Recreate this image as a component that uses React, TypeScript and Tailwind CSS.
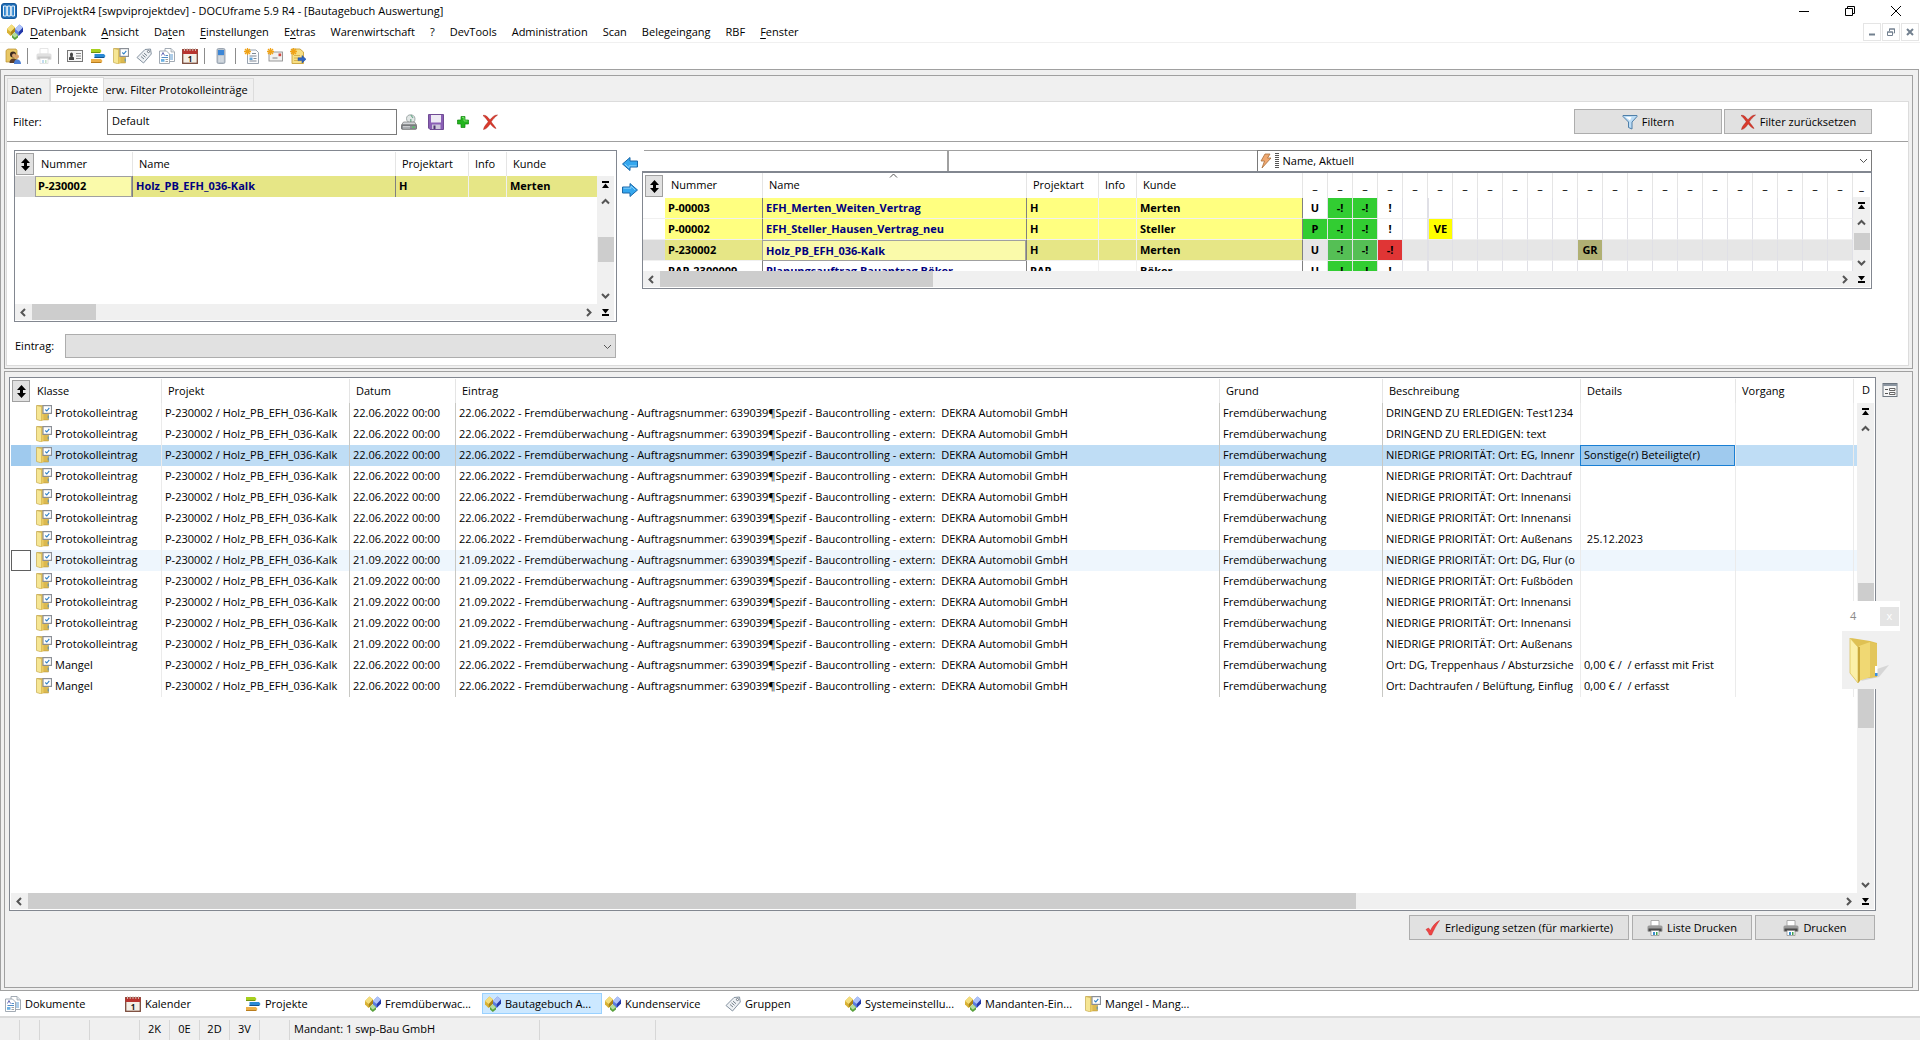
import type { ReactNode } from "react";
import clsx from "clsx";

/* ---------- icons ---------- */

function Icon({ size = 16, className, children }: { size?: number; className?: string; children: ReactNode }) {
  return (
    <svg width={size} height={size} viewBox="0 0 16 16" className={clsx("shrink-0", className)} aria-hidden="true">
      {children}
    </svg>
  );
}

const AppIcon = () => (
  <Icon>
    <rect x="0.5" y="0.5" width="15" height="15" rx="2.5" fill="#1d6cb5" stroke="#15589b" />
    <path d="M2.500 3h2.800v10H2.500zM6.600 3h2.800v10H6.600zM10.700 3h2.800v10h-2.800z" fill="#2f86d0" stroke="#fff" strokeWidth="0.9" />
  </Icon>
);

const CubesIcon = () => (
  <Icon>
    <path d="M4.500.5 8 3.500v4L3.500 12 0 8.500V5z" fill="#d9b235" />
    <path d="M4.500.5 8 3.500 3.800 8 0 5z" fill="#f4de7c" />
    <path d="M3.800 8v3.700L8 7.500v-4z" fill="#a98418" />
    <path d="M12.500.5 16 3.500v4L11.500 12 8 8.500V5z" fill="#5a7be0" />
    <path d="M12.500.5 16 3.500 11.800 8 8 5z" fill="#aec3f8" />
    <path d="M11.800 8v3.700L16 7.500v-4z" fill="#2338a8" />
    <path d="M8 8.500 11 11.300v2.200L7.800 16 5 13.500V11z" fill="#59a13c" />
    <path d="M8 8.500 11 11.300 7.800 13.800 5 11z" fill="#b5dd9d" />
  </Icon>
);

const UserFolderIcon = () => (
  <Icon>
    <path d="M1 2.500 3 1h8l1 1.500V14H1z" fill="#e8c765" stroke="#b98f2e" strokeWidth="0.700" />
    <circle cx="8" cy="6.500" r="3" fill="#3b2a20" />
    <circle cx="9" cy="7.500" r="2" fill="#dca66e" />
    <path d="M4.500 15c0-3 1.500-4.500 4-4.500S12.500 12 13 15z" fill="#5b3d2b" />
    <circle cx="12" cy="8.500" r="2" fill="#d9a06c" />
    <path d="M9 16c0-3 1-4.500 3.200-4.500S16 13 16 16z" fill="#4d7fd4" />
  </Icon>
);

const PrinterIcon = ({ faded = false }: { faded?: boolean }) => (
  <Icon className={faded ? "opacity-30" : ""}>
    <path d="M4 .5h8V6H4z" fill="#fff" stroke="#9a9a9a" strokeWidth="0.800" />
    <rect x="0.500" y="5.500" width="15" height="6.500" rx="1.500" fill="#9a9a9a" />
    <path d="M1.500 8.500h13v2.500h-13z" fill="#4a4a4a" />
    <path d="M4 10.500h8v5H4z" fill="#fff" stroke="#888" strokeWidth="0.700" />
    <path d="M6 12h2v3H6z" fill="#3b8fd0" />
    <path d="M9 12h1.500v3H9z" fill="#3ea04f" />
  </Icon>
);

const CardIcon = () => (
  <Icon>
    <rect x="0.500" y="2.500" width="15" height="11" fill="#f6f6f6" stroke="#777" />
    <path d="M2 12V9.500l1.500-1C2.500 7 2.800 4.500 4.500 4.500S6.500 7 5.500 8.500l1.500 1V12z" fill="#444" />
    <path d="M9 5.500h5M9 8h5M9 10.500h5" stroke="#888" />
  </Icon>
);

const GanttIcon = () => (
  <Icon>
    <path d="M1 1h9l1.500 2L10 5H1z" fill="#a7cf1e" />
    <path d="M1 4h9.500L10 5H1z" fill="#6f9310" />
    <path d="M4.500 6H14l1.500 2L14 10H4.500z" fill="#2a8ad6" />
    <path d="M4.500 9h10L14 10H4.500z" fill="#12528f" />
    <path d="M1 11h10l1.500 2-1.500 2H1z" fill="#ecb04a" />
    <path d="M1 14h10.700L11 15H1z" fill="#b97d1d" />
  </Icon>
);

const FolderCheckIcon = () => (
  <Icon>
    <path d="M1 .5h11.500v14.500H5L1 14z" fill="#dcb94f" stroke="#b3923a" strokeWidth="0.500" />
    <path d="M.5.5 5.500 1.500V16l-5-1.500z" fill="#f6e694" stroke="#c2a548" strokeWidth="0.600" />
    <path d="M5.500 1.500h2V15l-2 1z" fill="#eacb62" />
    <rect x="7" y="0.600" width="8.500" height="7.800" fill="#fff" stroke="#8b8f96" strokeWidth="1.200" />
    <path d="M9.300 4.500 10.800 6 13.300 2.800" fill="none" stroke="#2d7fc4" strokeWidth="1.100" />
    <path d="M12.200 10.500v3" stroke="#3f88c8" strokeWidth="0.900" />
  </Icon>
);

const TagIcon = () => (
  <Icon>
    <path d="M9 1.500 14.500 1l.8 5L7.500 15 1 9.500z" fill="#eef1f4" stroke="#8592a0" strokeLinejoin="round" />
    <circle cx="12.500" cy="3.500" r="1.100" fill="#fff" stroke="#55606c" strokeWidth="0.800" />
    <path d="M5 8.500 8 11M6.500 6.800 9.500 9.300M8 5.200 11 7.700" stroke="#6b7682" strokeWidth="0.900" />
  </Icon>
);

const DocsIcon = () => (
  <Icon>
    <path d="M6 .5h6L15.500 4v9.500H6z" fill="#fff" stroke="#98a1ab" strokeWidth="0.900" />
    <path d="M12 .5V4h3.500" fill="#dfe5ea" stroke="#98a1ab" strokeWidth="0.700" />
    <path d="M11 7h3M11 9h3M11 11h3" stroke="#5c9ad0" />
    <path d="M.5 3h7L10.500 6v9.500H.5z" fill="#fff" stroke="#98a1ab" strokeWidth="0.900" />
    <path d="M2.500 7.500 4 4.500l1.500 3" fill="none" stroke="#5a5fb0" strokeWidth="0.900" />
    <path d="M6.500 7.500H9M2.500 9.500H9" stroke="#3f7fc0" strokeWidth="0.900" />
    <path d="M2 11h3.500v2.800H2z" fill="#6cb1e2" />
    <path d="M6.500 11.500H9M6.500 13.500H9" stroke="#888" strokeWidth="0.800" />
  </Icon>
);

const CalendarIcon = () => (
  <Icon>
    <rect x="0.700" y="1.700" width="14.600" height="13.600" fill="#f4efe6" stroke="#7a4a3a" strokeWidth="1.300" />
    <path d="M.5 1.500h15V6H.5z" fill="#b8342f" />
    <path d="M2.500 0v3M5.200 0v3M8 0v3M10.800 0v3M13.500 0v3" stroke="#d8c8c0" strokeWidth="0.900" />
    <text x="8" y="13.500" textAnchor="middle" fontSize="8" fontWeight="700" fill="#1a1a1a">
      1
    </text>
  </Icon>
);

const PhoneIcon = () => (
  <Icon>
    <rect x="4" y="0.500" width="8" height="15" rx="1.500" fill="#b9c3cd" stroke="#8a96a3" strokeWidth="0.800" />
    <rect x="5" y="2" width="6" height="5" fill="#3c86d6" />
    <path d="M5.500 9h5M5.500 11h5M5.500 13h5" stroke="#fff" strokeDasharray="1.300 0.600" />
  </Icon>
);

const Star = () => <path d="M3.500 0v7M0 3.500h7M1 1l5 5M6 1 1 6" stroke="#f0a318" strokeWidth="1.300" />;

const DocStarIcon = () => (
  <Icon>
    <path d="M3.500 2h8.500l2.500 2.500v11h-11z" fill="#fbfcfd" stroke="#8d99a6" strokeWidth="0.900" />
    <path d="M8 5.500h4M5.500 8h7M5.500 13h7" stroke="#6f7c89" strokeWidth="0.900" />
    <path d="M5.500 9.500h3v2.500h-3z" fill="#5fa5dc" />
    <path d="M9.500 10.500h3" stroke="#6f7c89" strokeWidth="0.900" />
    <Star />
  </Icon>
);

const MailStarIcon = () => (
  <Icon>
    <rect x="2" y="4" width="13.500" height="9" fill="#f1f1f1" stroke="#8f8f8f" strokeWidth="0.900" />
    <path d="M11.500 5.500h2.700v2.700h-2.700z" fill="#d3473d" />
    <path d="M5.500 10h5" stroke="#777" strokeWidth="0.900" />
    <Star />
  </Icon>
);

const FolderStarIcon = () => (
  <Icon>
    <path d="M2 1h8l3.500 3v11.500H2z" fill="#f7df85" stroke="#c9a23a" strokeWidth="0.900" />
    <path d="M4 7.500h6M4 10h4M4 12.500h4" stroke="#d0a83f" strokeWidth="0.800" />
    <path d="M8 9.800h4V7.500l4 3.700-4 3.800v-2.400H8z" fill="#2f66c4" stroke="#1c4490" strokeWidth="0.500" />
    <Star />
  </Icon>
);

const DriveIcon = () => (
  <Icon>
    <path d="M5.500 4.500C5.500 2 7.500.8 9.500.8s4.500 1 4.500 4-1.500 4-4 4-4.500-1.500-4.500-4.300z" fill="#e2e7e6" stroke="#8d9897" strokeWidth="0.800" />
    <path d="M9.800 1 12 4M9.800 8.500V5" stroke="#6aa98b" strokeWidth="1.200" />
    <path d="M2.500 8h11l2 3H.5z" fill="#d3d6d9" stroke="#777" strokeWidth="0.700" />
    <rect x="0.500" y="11" width="15" height="4.300" rx="0.800" fill="#8b9095" stroke="#555" strokeWidth="0.700" />
    <path d="M2 12.500h7M2 14h7" stroke="#e5e5e5" strokeWidth="0.700" />
    <path d="M11.500 12.500h2v1.500h-2z" fill="#49d05a" />
  </Icon>
);

const FloppyIcon = () => (
  <Icon>
    <path d="M.5.5h15v15H2L.5 14z" fill="#8a5fb5" stroke="#66418c" strokeWidth="0.900" />
    <path d="M3 1h10v7.500H3z" fill="#eeeaf4" />
    <path d="M4 10.500h8.500V15H4z" fill="#cdc6da" />
    <path d="M5.500 11.500h2V15h-2z" fill="#4c3470" />
  </Icon>
);

const PlusIcon = () => (
  <Icon>
    <path d="M6 2.500h4V6h3.500v4H10v3.500H6V10H2.500V6H6z" fill="#23b51e" stroke="#12860f" strokeWidth="0.700" />
    <path d="M7 3.500h2v3.500h3.500" fill="none" stroke="#7fe06f" strokeWidth="0.900" />
  </Icon>
);

const CrossIcon = () => (
  <Icon>
    <path d="M1 1.500C3 .8 5 2 8 6c2-3 4.500-5 7.500-5-2.500 2-4.500 4-6.300 6.800C11 10.500 13 12.500 14 14.500c-2-.5-4-2.500-5.800-4.800C6.300 12.500 4.500 15 1.500 15.500 2 12.500 4.500 10 6.300 7.800 4.500 5 3 3 1 1.500z" fill="#da3a2c" stroke="#a8231a" strokeWidth="0.500" />
  </Icon>
);

const FunnelIcon = () => (
  <Icon>
    <path d="M1 1.500h14v1L10 8v7l-3.500-1.500V8L1 2.500z" fill="#bcdcf5" stroke="#4f7fa8" strokeLinejoin="round" />
    <path d="M3.500 3h6L8 6.500z" fill="#fff" />
  </Icon>
);

const CheckIcon = () => (
  <Icon>
    <path d="M1 9.500 3.500 8l2 2.500C7.500 6 10.500 2.500 14.500.5 11 5.500 9 9.500 6.500 15H4.500C3.800 13 2.500 11 1 9.500z" fill="#ee4444" stroke="#c22" strokeWidth="0.500" />
  </Icon>
);

const FormIcon = () => (
  <Icon>
    <rect x="1" y="1.500" width="14" height="13" fill="#f7f7f7" stroke="#6d7680" />
    <path d="M1 2h14v2H1z" fill="#8b95a0" />
    <path d="M3 7.500h3M3 11.500h3" stroke="#555" />
    <path d="M7.500 6.500H13v2H7.500zM7.500 10.500H13v2H7.500z" fill="#fff" stroke="#555" strokeWidth="0.900" />
  </Icon>
);

const BlueArrowIcon = ({ flip = false }: { flip?: boolean }) => (
  <Icon className={flip ? "rotate-180" : ""}>
    <path d="M.5 5H8V1.500L15.500 8 8 14.500V11H.5z" fill="#35a7ee" stroke="#1a67a8" strokeLinejoin="round" />
    <path d="M1.500 6.200H9V4l4 4" fill="none" stroke="#8fd4fb" strokeWidth="0.900" />
  </Icon>
);

const BoltIcon = () => (
  <Icon>
    <path d="M6 1h5L8.500 5H12L3 15l2.500-7H2z" fill="#f0a870" stroke="#a8703c" strokeWidth="0.800" />
  </Icon>
);

const SortArrow = () => (
  <svg width="9" height="13" viewBox="0 0 9 13" aria-hidden="true">
    <path d="M4.500 0 9 5H6v3h3l-4.500 5L0 8h3V5H0z" fill="#000" />
  </svg>
);

/* ---------- scrollbars ---------- */

const chevrons = {
  up: "M1 6.500 4.500 3 8 6.500",
  down: "M1 3 4.500 6.500 8 3",
  left: "M6 1 2.500 4.500 6 8",
  right: "M3 1 6.500 4.500 3 8",
};

function Chevron({ dir, thin = false }: { dir: keyof typeof chevrons; thin?: boolean }) {
  return (
    <svg width="9" height="9" viewBox="0 0 9 9" aria-hidden="true">
      <path d={chevrons[dir]} fill="none" stroke="#555" strokeWidth={thin ? 1 : 2} />
    </svg>
  );
}

function JumpIcon({ end = false }: { end?: boolean }) {
  return (
    <svg width="7" height="7" viewBox="0 0 7 7" className={end ? "rotate-180" : ""} aria-hidden="true">
      <path d="M0 0h7v2H0zM3.500 2.500 7 7H0z" fill="#000" />
    </svg>
  );
}

type ScrollProps = { before: number; thumb: number; after: number };

function VScroll({ before, thumb, after }: ScrollProps) {
  return (
    <div className="flex w-[17px] flex-1 flex-col items-center bg-[#f0f0f0]">
      <div className="flex h-[17px] shrink-0 items-center">
        <JumpIcon />
      </div>
      <div className="flex h-[17px] shrink-0 items-center">
        <Chevron dir="up" />
      </div>
      <div style={{ flexGrow: before }} />
      <div className="w-4 bg-[#cdcdcd]" style={{ flexGrow: thumb }} />
      <div style={{ flexGrow: after }} />
      <div className="flex h-[17px] shrink-0 items-center">
        <Chevron dir="down" />
      </div>
    </div>
  );
}

function HScroll({ thumb, after }: { thumb: number; after: number }) {
  return (
    <div className="flex h-4 shrink-0 items-center bg-[#f0f0f0]">
      <div className="flex w-[17px] justify-center">
        <Chevron dir="left" />
      </div>
      <div className="h-full bg-[#cdcdcd]" style={{ flexGrow: thumb }} />
      <div style={{ flexGrow: after }} />
      <div className="flex w-[17px] justify-center">
        <Chevron dir="right" />
      </div>
      <div className="flex w-[17px] justify-center">
        <JumpIcon end />
      </div>
    </div>
  );
}

/* ---------- shared controls ---------- */

function SortButton() {
  return (
    <button type="button" aria-label="Sortierung" className="flex h-[22px] w-[18px] items-center justify-center border border-[#a0a0a0] bg-[#e1e1e1]">
      <SortArrow />
    </button>
  );
}

function PushButton({ icon, width, children }: { icon: ReactNode; width: string; children: ReactNode }) {
  return (
    <button type="button" className={clsx("flex h-[25px] items-center justify-center gap-1 border border-[#adadad] bg-[#e1e1e1]", width)}>
      {icon}
      <span>{children}</span>
    </button>
  );
}

function HeadCell({ children, line = true }: { children?: ReactNode; line?: boolean }) {
  return (
    <th scope="col" className={clsx("overflow-hidden p-0 pb-px pl-1.5 text-left font-normal whitespace-nowrap", line && "border-l border-[#e5e5e5]")}>
      {children}
    </th>
  );
}

/* ---------- title, menu, toolbar ---------- */

function TitleBar() {
  return (
    <header className="flex h-[22px] items-center gap-1.5 bg-white pl-px">
      <AppIcon />
      <h1 className="flex-1">DFViProjektR4 [swpviprojektdev] - DOCUframe 5.9 R4 - [Bautagebuch Auswertung]</h1>
      <div className="flex gap-[34px] pr-[18px]">
        <button type="button" aria-label="Minimieren">
          <svg width="12" height="12" viewBox="0 0 12 12"><path d="M1 6.500h10" stroke="#000" /></svg>
        </button>
        <button type="button" aria-label="Wiederherstellen">
          <svg width="12" height="12" viewBox="0 0 12 12" fill="none" stroke="#000"><path d="M1.500 3.500h7v7h-7zM3.500 3.500v-2h7v7h-2" /></svg>
        </button>
        <button type="button" aria-label="Schließen">
          <svg width="12" height="12" viewBox="0 0 12 12" stroke="#000"><path d="M1 1l10 10M11 1 1 11" /></svg>
        </button>
      </div>
    </header>
  );
}

const menus: [string, string, string][] = [
  ["", "D", "atenbank"],
  ["", "A", "nsicht"],
  ["Da", "t", "en"],
  ["", "E", "instellungen"],
  ["E", "x", "tras"],
  ["Warenwirtschaft", "", ""],
  ["?", "", ""],
  ["DevTools", "", ""],
  ["Administration", "", ""],
  ["Scan", "", ""],
  ["Belegeingang", "", ""],
  ["RBF", "", ""],
  ["", "F", "enster"],
];

function MenuBar() {
  return (
    <nav className="flex h-[21px] items-center border-b border-[#f0f0f0] bg-white pl-[7px]">
      <CubesIcon />
      <div className="flex flex-1 gap-[15px] pl-[7px]">
        {menus.map(([before, key, after]) => (
          <button type="button" key={before + key + after}>
            {before}
            {key && <u className="underline-offset-2">{key}</u>}
            {after}
          </button>
        ))}
      </div>
      <div className="flex gap-px pr-px">
        <button type="button" aria-label="Fenster minimieren" className="flex size-[18px] items-center justify-center border border-[#e5e5e5]">
          <svg width="8" height="8" viewBox="0 0 8 8"><path d="M1 6.500h6" stroke="#72808f" strokeWidth="2" /></svg>
        </button>
        <button type="button" aria-label="Fenster wiederherstellen" className="flex size-[18px] items-center justify-center border border-[#e5e5e5]">
          <svg width="8" height="8" viewBox="0 0 8 8" fill="none" stroke="#72808f"><path d="M.5 4h5v3.500h-5zM0 4h6M2.500 3V1h5v4H6.500M2 1h6" /></svg>
        </button>
        <button type="button" aria-label="Fenster schließen" className="flex size-[18px] items-center justify-center border border-[#e5e5e5]">
          <svg width="8" height="8" viewBox="0 0 8 8"><path d="M1 1l6 6M7 1 1 7" stroke="#72808f" strokeWidth="2" /></svg>
        </button>
      </div>
    </nav>
  );
}

const toolGroups: [string, ReactNode][][] = [
  [["Benutzer", <UserFolderIcon />]],
  [["Drucken", <PrinterIcon faded />]],
  [
    ["Adressen", <CardIcon />],
    ["Projekte", <GanttIcon />],
    ["Mangel", <FolderCheckIcon />],
    ["Gruppen", <TagIcon />],
    ["Dokumente", <DocsIcon />],
    ["Kalender", <CalendarIcon />],
  ],
  [["Telefon", <PhoneIcon />]],
  [
    ["Neues Dokument", <DocStarIcon />],
    ["Neue E-Mail", <MailStarIcon />],
    ["Neue Aufgabe", <FolderStarIcon />],
  ],
];

function Toolbar() {
  return (
    <div className="flex h-[26px] items-center bg-white pl-[5px]">
      {toolGroups.map((group, i) => (
        <div key={i} className={clsx("flex gap-[7px] pr-1.5", i > 0 && "border-l border-[#8c8c8c] pl-2")}>
          {group.map(([label, icon]) => (
            <button type="button" key={label} aria-label={label}>
              {icon}
            </button>
          ))}
        </div>
      ))}
    </div>
  );
}

/* ---------- upper panel ---------- */

function FilterRow() {
  return (
    <div className="flex h-10 items-center border-b border-[#a0a0a0] pr-9 pl-1.5">
      <label htmlFor="filter" className="w-[94px]">Filter:</label>
      <input id="filter" defaultValue="Default" className="h-[26px] w-[290px] border border-[#7a7a7a] bg-white px-1 pb-0.5" />
      <div className="flex flex-1 gap-[11px] pl-1">
        <button type="button" aria-label="Laden"><DriveIcon /></button>
        <button type="button" aria-label="Speichern"><FloppyIcon /></button>
        <button type="button" aria-label="Hinzufügen"><PlusIcon /></button>
        <button type="button" aria-label="Löschen"><CrossIcon /></button>
      </div>
      <div className="flex gap-0.5">
        <PushButton icon={<FunnelIcon />} width="w-[148px]">Filtern</PushButton>
        <PushButton icon={<CrossIcon />} width="w-[148px]">Filter zurücksetzen</PushButton>
      </div>
    </div>
  );
}

function SelectedProjects() {
  return (
    <div className="flex h-[172px] w-[603px] flex-col border border-[#828790] pt-px pr-0.5 pb-px">
      <div className="flex flex-1">
        <table className="h-[45px] flex-1 table-fixed border-separate border-spacing-0">
          <colgroup>
            <col className="w-5" />
            <col className="w-[97px]" />
            <col className="w-[263px]" />
            <col className="w-[73px]" />
            <col className="w-[38px]" />
            <col />
          </colgroup>
          <thead>
            <tr className="h-6">
              <th className="p-0 pl-px"><SortButton /></th>
              <HeadCell line={false}>Nummer</HeadCell>
              <HeadCell>Name</HeadCell>
              <HeadCell>Projektart</HeadCell>
              <HeadCell>Info</HeadCell>
              <HeadCell>Kunde</HeadCell>
            </tr>
          </thead>
          <tbody>
            <tr className="h-[21px] bg-[#e6e686] font-bold whitespace-nowrap">
              <td className="bg-[#dadada] p-0" />
              <td className="border border-[#a0a0a0] bg-[#fafaaa] p-0 pb-px pl-0.5">P-230002</td>
              <td className="border-l border-[#808080] p-0 pb-px pl-[3px] text-[#000080]">Holz_PB_EFH_036-Kalk</td>
              <td className="border-l border-[#808080] p-0 pb-px pl-[3px]">H</td>
              <td className="border-l border-[#f0f0f0] p-0" />
              <td className="border-l border-[#f0f0f0] p-0 pb-px pl-[3px]">Merten</td>
            </tr>
          </tbody>
        </table>
        <div className="flex w-[17px] flex-col">
          <div className="h-6" />
          <VScroll before={28} thumb={25} after={26} />
        </div>
      </div>
      <HScroll thumb={64} after={484} />
    </div>
  );
}

type Plan = { text?: string; cls?: string };
type Project = { nr: string; name: string; art: string; kunde: string; row: string; plan: Record<number, Plan> };

const green = { text: "-!", cls: "bg-[#32cd32]" };

const projects: Project[] = [
  {
    nr: "P-00003", name: "EFH_Merten_Weiten_Vertrag", art: "H", kunde: "Merten", row: "bg-[#ffff80]",
    plan: { 0: { text: "U" }, 1: green, 2: green, 3: { text: "!" } },
  },
  {
    nr: "P-00002", name: "EFH_Steller_Hausen_Vertrag_neu", art: "H", kunde: "Steller", row: "bg-[#ffff80]",
    plan: { 0: { text: "P", cls: "bg-[#32cd32]" }, 1: green, 2: green, 3: { text: "!" }, 5: { text: "VE", cls: "bg-[#ffff00]" }, 22: { cls: "bg-[#00c000]" } },
  },
  {
    nr: "P-230002", name: "Holz_PB_EFH_036-Kalk", art: "H", kunde: "Merten", row: "bg-[#e6e686]",
    plan: {
      0: { text: "U" },
      1: { text: "-!", cls: "bg-[#55bf55]" },
      2: { text: "-!", cls: "bg-[#55bf55]" },
      3: { text: "-!", cls: "bg-[#e03535]" },
      11: { text: "GR", cls: "bg-[#b0b073]" },
    },
  },
  {
    nr: "PAR-2300009", name: "Planungsauftrag Bauantrag Böker", art: "PAR", kunde: "Böker", row: "bg-white",
    plan: { 0: { text: "U" }, 1: green, 2: green, 3: { text: "!" } },
  },
];

const planColumns = Array.from({ length: 23 }, (_, i) => i);

function ProjectPool() {
  return (
    <div className="flex min-w-0 flex-1 flex-col">
      <div className="flex h-[21px] pl-0.5">
        <input aria-label="Suche Nummer" className="min-w-0 flex-[303] border-t border-r-2 border-[#a0a0a0] bg-white" />
        <input aria-label="Suche Name" className="min-w-0 flex-[308] border-t border-[#a0a0a0] bg-white" />
        <div className="relative flex flex-[616]">
          <select aria-label="Ansicht" className="w-full appearance-none border border-b-0 border-[#7a7a7a] bg-white pl-[25px]">
            <option>Name, Aktuell</option>
          </select>
          <div className="pointer-events-none absolute top-[3px] left-0.5 flex">
            <BoltIcon />
            <div className="h-4 w-1 bg-[repeating-linear-gradient(#555_0_1px,transparent_1px_2px)]" />
          </div>
          <div className="pointer-events-none absolute top-1.5 right-1">
            <Chevron dir="down" thin />
          </div>
        </div>
      </div>
      <div className="flex h-[118px] flex-col border border-t-2 border-[#828790] pr-px pb-px">
        <div className="flex min-h-0 flex-1">
          <div className="min-w-0 flex-1 overflow-hidden">
            <table className="w-full table-fixed border-separate border-spacing-0">
              <colgroup>
                <col className="w-[22px]" />
                <col className="w-[97px]" />
                <col className="w-[264px]" />
                <col className="w-[72px]" />
                <col className="w-[38px]" />
                <col className="w-[166px]" />
                {planColumns.map((c) => (
                  <col key={c} className={c === 22 ? "" : "w-[25px]"} />
                ))}
              </colgroup>
              <thead>
                <tr className="h-[25px]">
                  <th className="p-0 pt-px pl-0.5"><SortButton /></th>
                  <HeadCell line={false}>Nummer</HeadCell>
                  <th scope="col" className="relative border-l border-[#e5e5e5] p-0 pb-px pl-1.5 text-left font-normal">
                    Name
                    <span className="absolute -top-0.5 left-[126px]">
                      <Chevron dir="up" thin />
                    </span>
                  </th>
                  <HeadCell>Projektart</HeadCell>
                  <HeadCell>Info</HeadCell>
                  <HeadCell>Kunde</HeadCell>
                  {planColumns.map((c) => (
                    <th key={c} className="border-l border-[#e5e5e5] p-0 pt-1.5 font-normal">
                      {c < 22 && "–"}
                    </th>
                  ))}
                </tr>
              </thead>
              <tbody className="font-bold whitespace-nowrap">
                {projects.map((p, i) => {
                  const current = i === 2;
                  const line = "border-b border-b-[#f0f0f0] p-0";
                  return (
                    <tr key={p.nr} className="h-[21px]">
                      <td className={clsx(line, current && "bg-[#dadada]")} />
                      <td className={clsx(line, p.row, "pl-[3px]")}>{p.nr}</td>
                      <td
                        className={clsx(
                          "p-0 pl-[3px] text-[#000080]",
                          current ? "border border-[#a0a0a0] bg-[#fafaaa]" : ["border-b border-l border-b-[#f0f0f0] border-l-[#808080]", p.row],
                        )}
                      >
                        {p.name}
                      </td>
                      <td className={clsx(line, p.row, "border-l border-l-[#808080] pl-[3px]")}>{p.art}</td>
                      <td className={clsx(line, p.row, "border-l border-l-[#f0f0f0]")} />
                      <td className={clsx(line, p.row, "border-l border-l-[#f0f0f0] pl-[3px]")}>{p.kunde}</td>
                      {planColumns.map((c) => (
                        <td
                          key={c}
                          className={clsx(
                            line,
                            "border-l text-center",
                            c === 0 ? "border-l-[#808080]" : "border-l-[#e0e0e6]",
                            c === 5 && "border-l-2",
                            p.plan[c]?.cls ?? (current && "bg-[#e6e6e6]"),
                          )}
                        >
                          {p.plan[c]?.text}
                        </td>
                      ))}
                    </tr>
                  );
                })}
              </tbody>
            </table>
          </div>
          <div className="flex w-[17px] flex-col">
            <div className="h-6 pt-[9px] text-center">–</div>
            <VScroll before={2} thumb={17} after={4} />
          </div>
        </div>
        <HScroll thumb={273} after={903} />
      </div>
    </div>
  );
}

function UpperPanel() {
  return (
    <section className="flex h-[294px] flex-col border border-[#a0a0a0] bg-[#f0f0f0] pt-px pr-[3px] pb-0.5 pl-px">
      <div role="tablist" className="flex items-end pl-px">
        <button type="button" role="tab" className="h-[23px] w-[43px] border border-b-0 border-[#dcdcdc] pr-1 text-center">Daten</button>
        <button type="button" role="tab" aria-selected="true" className="-mb-px h-[25px] w-[54px] border border-b-0 border-[#dcdcdc] bg-white pb-[3px]">Projekte</button>
        <button type="button" role="tab" className="h-[23px] w-[150px] border-t border-r border-[#dcdcdc] pr-1 whitespace-nowrap">erw. Filter Protokolleinträge</button>
      </div>
      <div className="flex-1 border border-[#dcdcdc] bg-white">
        <FilterRow />
        <div className="flex pt-2 pr-9 pl-[7px]">
          <SelectedProjects />
          <div className="flex w-[25px] flex-col items-center gap-2.5 pt-1.5">
            <button type="button" aria-label="Projekt hinzufügen"><BlueArrowIcon flip /></button>
            <button type="button" aria-label="Projekt entfernen"><BlueArrowIcon /></button>
          </div>
          <ProjectPool />
        </div>
        <div className="flex items-center pt-3 pl-2">
          <label htmlFor="eintrag" className="w-[50px]">Eintrag:</label>
          <div className="relative w-[551px]">
            <select id="eintrag" className="h-6 w-full appearance-none border border-[#adadad] bg-[#e1e1e1]" />
            <div className="pointer-events-none absolute top-2 right-1">
              <Chevron dir="down" thin />
            </div>
          </div>
        </div>
      </div>
    </section>
  );
}

/* ---------- lower panel ---------- */

const juni = "22.06.2022";
const september = "21.09.2022";

type Entry = { klasse: string; tag: string; text: string; details?: string };

const entries: Entry[] = [
  { klasse: "Protokolleintrag", tag: juni, text: "DRINGEND ZU ERLEDIGEN: Test1234" },
  { klasse: "Protokolleintrag", tag: juni, text: "DRINGEND ZU ERLEDIGEN: text" },
  { klasse: "Protokolleintrag", tag: juni, text: "NIEDRIGE PRIORITÄT: Ort: EG, Innenr", details: "Sonstige(r) Beteiligte(r)" },
  { klasse: "Protokolleintrag", tag: juni, text: "NIEDRIGE PRIORITÄT: Ort: Dachtrauf" },
  { klasse: "Protokolleintrag", tag: juni, text: "NIEDRIGE PRIORITÄT: Ort: Innenansi" },
  { klasse: "Protokolleintrag", tag: juni, text: "NIEDRIGE PRIORITÄT: Ort: Innenansi" },
  { klasse: "Protokolleintrag", tag: juni, text: "NIEDRIGE PRIORITÄT: Ort: Außenans", details: " 25.12.2023" },
  { klasse: "Protokolleintrag", tag: september, text: "NIEDRIGE PRIORITÄT: Ort: DG, Flur (o" },
  { klasse: "Protokolleintrag", tag: september, text: "NIEDRIGE PRIORITÄT: Ort: Fußböden" },
  { klasse: "Protokolleintrag", tag: september, text: "NIEDRIGE PRIORITÄT: Ort: Innenansi" },
  { klasse: "Protokolleintrag", tag: september, text: "NIEDRIGE PRIORITÄT: Ort: Innenansi" },
  { klasse: "Protokolleintrag", tag: september, text: "NIEDRIGE PRIORITÄT: Ort: Außenans" },
  { klasse: "Mangel", tag: juni, text: "Ort: DG, Treppenhaus / Absturzsiche", details: "0,00 € /  / erfasst mit Frist" },
  { klasse: "Mangel", tag: juni, text: "Ort: Dachtraufen / Belüftung, Einflug", details: "0,00 € /  / erfasst" },
];

function EntryGrid() {
  const light = "border-l border-[#ebebeb] p-0 pb-px pl-[3px]";
  const dark = "border-l border-[#c8c8c4] p-0 pb-px pl-[3px]";
  return (
    <div className="flex min-w-0 flex-1 flex-col border border-[#828790] bg-white p-px">
      <div className="flex flex-1">
        <div className="min-w-0 flex-1">
          <table className="w-full table-fixed border-separate border-spacing-0">
            <colgroup>
              <col className="w-5" />
              <col className="w-[130px]" />
              <col className="w-[188px]" />
              <col className="w-[106px]" />
              <col />
              <col className="w-[163px]" />
              <col className="w-[198px]" />
              <col className="w-[155px]" />
              <col className="w-[118px]" />
              <col className="w-1" />
            </colgroup>
            <thead>
              <tr className="h-6">
                <th className="p-0 pl-px"><SortButton /></th>
                <HeadCell line={false}>Klasse</HeadCell>
                <HeadCell>Projekt</HeadCell>
                <HeadCell>Datum</HeadCell>
                <HeadCell>Eintrag</HeadCell>
                <HeadCell>Grund</HeadCell>
                <HeadCell>Beschreibung</HeadCell>
                <HeadCell>Details</HeadCell>
                <HeadCell>Vorgang</HeadCell>
                <HeadCell />
              </tr>
            </thead>
            <tbody className="whitespace-pre">
              {entries.map((e, i) => (
                <tr key={i} className={clsx("h-[21px]", i === 2 && "bg-[#bfddf5]", i === 7 && "bg-[#eef6fd]")}>
                  <td className={clsx("p-0", i === 2 && "bg-[#9fcaee]", i === 7 && "border border-[#606060] bg-white")} />
                  <td className="p-0 pb-px pl-[5px]">
                    <div className="flex items-center gap-[3px]">
                      <FolderCheckIcon />
                      {e.klasse}
                    </div>
                  </td>
                  <td className={light}>P-230002 / Holz_PB_EFH_036-Kalk</td>
                  <td className={dark}>{e.tag} 00:00</td>
                  <td className={dark}>{e.tag} - Fremdüberwachung - Auftragsnummer: 639039¶Spezif - Baucontrolling - extern:  DEKRA Automobil GmbH</td>
                  <td className={dark}>Fremdüberwachung</td>
                  <td className={clsx(dark, "pr-[3px]")}>
                    <div className="overflow-hidden">{e.text}</div>
                  </td>
                  <td className={i === 2 ? "border border-[#1a7fd4] bg-[#9fcaee] p-0 pb-px pl-[3px]" : light}>{e.details}</td>
                  <td className={light} />
                  <td className={light} />
                </tr>
              ))}
            </tbody>
          </table>
        </div>
        <div className="flex w-[17px] flex-col">
          <div className="h-6 pt-[3px] pl-[5px]">D</div>
          <VScroll before={145} thumb={145} after={147} />
        </div>
      </div>
      <HScroll thumb={1328} after={484} />
    </div>
  );
}

function FloatingFolder() {
  return (
    <div className="absolute top-[229px] right-3 w-[58px]">
      <div className="flex h-[30px] items-center justify-between bg-white pr-px pl-2 text-[#8a8a8a]">
        4
        <button type="button" aria-label="Ablage schließen" className="h-[19px] w-[19px] bg-[#e4e4e4] text-white">x</button>
      </div>
      <div className="h-[58px] bg-[#f0f0f0] pt-1.5 pl-[7px]">
        <svg width="46" height="48" viewBox="0 0 46 48" aria-hidden="true">
          <path d="M22 34 40 28 30 40 12 44z" fill="#c4c4c4" opacity="0.600" />
          <path d="M2 1 21 4 28 6v34L10 42z" fill="#dfc153" />
          <path d="M10 9 21 5v35L10 44z" fill="#f0d873" />
          <path d="M21 5 28 7v32l-7 2z" fill="#e3c65c" />
          <path d="M1 1 9 10v36L1 36z" fill="#fbf0a8" stroke="#d8bb4e" strokeWidth="0.700" />
          <path d="M9 10h2v34l-2 2z" fill="#c9a83a" />
          <path d="M26 29h2.500v7H26z" fill="#fff" />
          <path d="M26 36h2.500v3H26z" fill="#3c8fe0" />
        </svg>
      </div>
    </div>
  );
}

function LowerPanel() {
  return (
    <section className="relative mt-0.5 flex flex-1 flex-col border border-[#a0a0a0] bg-[#f0f0f0] pt-[5px] pb-[47px] pl-1">
      <div className="flex flex-1">
        <EntryGrid />
        <div className="w-9 pt-[5px] pl-1.5">
          <button type="button" aria-label="Formularansicht"><FormIcon /></button>
        </div>
      </div>
      <div className="flex justify-end gap-[3px] pt-1 pr-[37px]">
        <PushButton icon={<CheckIcon />} width="w-[220px]">Erledigung setzen (für markierte)</PushButton>
        <PushButton icon={<PrinterIcon />} width="w-[120px]">Liste Drucken</PushButton>
        <PushButton icon={<PrinterIcon />} width="w-[120px]">Drucken</PushButton>
      </div>
      <FloatingFolder />
    </section>
  );
}

/* ---------- window tabs, status ---------- */

const windows: [ReactNode, string][] = [
  [<DocsIcon />, "Dokumente"],
  [<CalendarIcon />, "Kalender"],
  [<GanttIcon />, "Projekte"],
  [<CubesIcon />, "Fremdüberwac..."],
  [<CubesIcon />, "Bautagebuch A..."],
  [<CubesIcon />, "Kundenservice"],
  [<TagIcon />, "Gruppen"],
  [<CubesIcon />, "Systemeinstellu..."],
  [<CubesIcon />, "Mandanten-Ein..."],
  [<FolderCheckIcon />, "Mangel - Mang..."],
];

function WindowBar() {
  return (
    <div className="flex h-[27px] items-center border-b-2 border-[#dadada] bg-white pl-0.5">
      {windows.map(([icon, label]) => (
        <button
          type="button"
          key={label}
          className={clsx("flex h-[21px] w-[120px] items-center gap-1 border pl-0.5", label.startsWith("Bau") ? "border-[#99d1ff] bg-[#cce8ff]" : "border-transparent")}
        >
          {icon}
          {label}
        </button>
      ))}
    </div>
  );
}

const statusCells: [string, string][] = [
  ["", "w-5"],
  ["", "w-5"],
  ["", "w-[50px]"],
  ["", "w-[50px]"],
  ["2K", "w-[30px] text-center"],
  ["0E", "w-[30px] text-center"],
  ["2D", "w-[30px] text-center"],
  ["3V", "w-[30px] text-center"],
  ["", "w-[30px]"],
  ["Mandant: 1 swp-Bau GmbH", "w-[250px] pl-1"],
  ["", "w-[116px]"],
];

function StatusBar() {
  return (
    <footer className="flex h-[22px] bg-[#f0f0f0] pt-0.5">
      {statusCells.map(([text, cls], i) => (
        <div key={i} className={clsx("border-r border-[#d7d7d7] pt-px", cls)}>
          {text}
        </div>
      ))}
    </footer>
  );
}

export default function App() {
  return (
    <div className="flex min-h-screen flex-col bg-white font-['Open_Sans','Noto_Sans',sans-serif] text-[11px] leading-4 text-black">
      <TitleBar />
      <MenuBar />
      <Toolbar />
      <main className="mr-px flex flex-1 flex-col border border-[#a0a0a0] bg-[#f0f0f0] pt-[5px] pr-[5px] pb-0.5 pl-[3px]">
        <UpperPanel />
        <LowerPanel />
      </main>
      <WindowBar />
      <StatusBar />
    </div>
  );
}
